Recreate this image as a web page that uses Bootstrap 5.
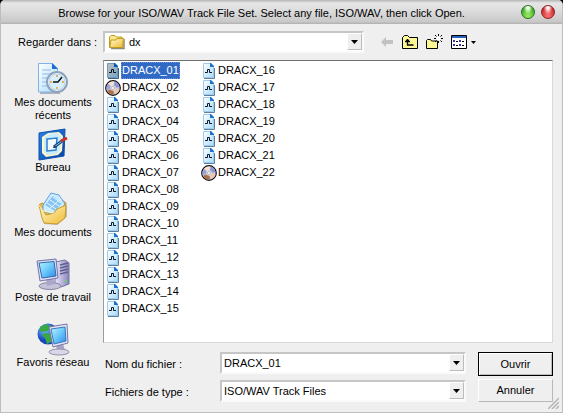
<!DOCTYPE html>
<html lang="fr">
<head>
<meta charset="utf-8">
<meta name="viewport" content="width=device-width, initial-scale=1">
<title>Browse for your ISO/WAV Track File Set</title>
<link href="https://cdn.jsdelivr.net/npm/bootstrap@5.3.0/dist/css/bootstrap.min.css" rel="stylesheet">
<style>
body{background:#000;color:#000;font:11px/13px "Liberation Sans",Arial,sans-serif}
svg{display:block;flex:none}
button,input,select{font:inherit;color:inherit}
.dialog{background:#efefef;border:1px solid #bdbdbd;border-top:0;border-radius:5px 5px 0 0;overflow:hidden;padding-bottom:10px}
.titlebar{height:24px;background:linear-gradient(#b4b4b4,#e6e6e6 3px,#dedede 40%,#c9c9c9 90%,#b0b0b0);position:relative}
.titlebar h1{font-size:11px;line-height:13px;color:#000;padding:2px 40px 0 0}
.orbs{position:absolute;right:7px;top:5px;gap:6px}
.orb{width:14px;height:14px;border-radius:50%;padding:0;border:1px solid #287020;background:radial-gradient(ellipse at 50% 10%,#fff 8%,#a8e888 30%,transparent 52%),radial-gradient(circle at 50% 85%,#9cf060,#3fa82c 70%)}
.orb-close{border-color:#8c2020;background:radial-gradient(ellipse at 50% 10%,#fff 8%,#f0a0a0 30%,transparent 52%),radial-gradient(circle at 50% 85%,#ff7070,#c82c30 70%)}
.main-grid{display:grid;grid-template-columns:102px 1fr;grid-template-rows:auto auto 1fr;padding:7px 9px 0 0}
.toolrow{height:22px}
.look-label{padding-right:6px;line-height:22px}
.sunken{background:#fff;border:2px solid;border-color:#c6c6c6 #fafafa #fafafa #c6c6c6;height:22px;min-width:0}
.sunken select,.sunken input{appearance:none;border:0;background:transparent;outline:0;padding:0 0 0 1px;min-width:0;width:100%;height:18px;border-radius:0}
.combo{display:grid;grid-template-columns:1fr 15px}
.combo>select{grid-area:1/1/2/3}
.combo>.drop{grid-area:1/2}
.drop{width:15px;height:17px;background:#efefef;border:1px solid;border-color:#fff #bcbcbc #bcbcbc #fff;padding:0;display:grid;place-items:center;pointer-events:none}
button.drop{pointer-events:auto}
.combo.look-in{width:261px;grid-template-columns:22px 1fr 15px}
.look-in>svg{grid-area:1/1;margin:1px 0 0 4px;z-index:1;pointer-events:none}
.combo.look-in>select{grid-area:1/1/2/4;padding-left:24px}
.combo.look-in>.drop{grid-area:1/3}
.tool{border:0;background:none;padding:0}
.places{padding:9px 0 0 2px;grid-row:2/4}
.place{height:65px;border:0;background:none;padding:0;width:100%;line-height:13px}
.place:last-child{height:auto}
.files{background:#fff;border:1px solid;border-color:#6f6f6f #dadada #dadada #9c9c9c;margin-top:7px;height:283px;padding:1px 0 0 1px;display:grid;grid-template-rows:repeat(15,17px);grid-auto-flow:column;grid-auto-columns:96px;align-content:start}
.file{border:0;background:none;padding:0;text-align:left;height:17px}
.file span{padding:1px;line-height:15px}
.file.selected span{background:#316ac5;color:#fff;outline:1px dotted #6d95d8;outline-offset:-1px}
.file.selected svg{filter:brightness(.75) saturate(1.3)}
.fields{padding:9px 0 0 2px;gap:12px}
.field-grid{display:grid;grid-template-columns:115px 1fr;row-gap:6px;align-content:start;align-items:center}
.field-grid select,.field-grid input{padding-left:2px}
.field-grid label{padding-top:2px}
.actions{width:75px;gap:3px}
.push{height:23px;background:#efefef;border:1px solid;border-color:#fff #b8b8b8 #b8b8b8 #fff;padding:0}
.push.primary{height:24px;border-color:#000;box-shadow:inset 1px 1px #fff,inset -1px -1px #bcbcbc}
.grip{position:absolute;right:3px;bottom:3px}
</style>
</head>
<body>
<svg width="0" height="0" class="position-absolute" aria-hidden="true">
<defs>
<linearGradient id="page" x2="1" y2="1"><stop stop-color="#fff"/><stop offset="1" stop-color="#a9dcfa"/></linearGradient>
<linearGradient id="gold" x2="1" y2="1"><stop stop-color="#fffbd0"/><stop offset="1" stop-color="#efb92f"/></linearGradient>
<linearGradient id="screen" x2="1" y2="1"><stop stop-color="#b8f4ff"/><stop offset=".5" stop-color="#6ac8fa"/><stop offset="1" stop-color="#2f86e6"/></linearGradient>
<linearGradient id="case" x2="1" y2="0"><stop stop-color="#eceafa"/><stop offset="1" stop-color="#8583b8"/></linearGradient>
<linearGradient id="blue" x2="1" y2="1"><stop stop-color="#2a86e8"/><stop offset="1" stop-color="#0b3fa4"/></linearGradient>
<radialGradient id="globe" cx=".35" cy=".3"><stop stop-color="#7cc4ff"/><stop offset="1" stop-color="#1546ba"/></radialGradient>
<pattern id="dither" width="2" height="2" patternUnits="userSpaceOnUse"><path fill="#fff36a" d="M0 0h2v2H0z"/><path fill="#fffcc0" d="M0 0h1v1H0zM1 1h1v1H1z"/></pattern>
<symbol id="wav" viewBox="0 0 16 16"><path d="M3 15.500h10.500V5" fill="none" stroke="#5f7f9c"/><path d="M2.500.5h7l3 3v11h-10z" fill="url(#page)" stroke="#9ccbee"/><path d="M9 0v4h4V3l-3-3z" fill="#1f72c8"/><path d="M4 9.500h2.500V6.500h2v3h2.500" fill="none" stroke="#101828"/></symbol>
<symbol id="disc" viewBox="0 0 16 16"><circle cx="8" cy="8" r="7.300" fill="#c9c5e4" stroke="#111" stroke-width="1.200"/><path d="M8 8L3 3.500a7 7 0 0 1 6-2z" fill="#f6e2cc"/><path d="M8 8L3 4a7 7 0 0 0-1.500 6z" fill="#9aa2dc"/><path d="M8 8l-6 3a7 7 0 0 0 7 3.500z" fill="#a9704a"/><path d="M8 8l6.500 1a7 7 0 0 1-4.500 5z" fill="#efc8ac"/><path d="M8 8l2-6.500A7 7 0 0 1 14.500 7z" fill="#8c94d6"/><circle cx="8" cy="8" r="2.800" fill="#ddd"/><circle cx="8" cy="8" r="1.500" fill="#fff" stroke="#888" stroke-width=".5"/></symbol>
<symbol id="caret" viewBox="0 0 7 4"><path d="M0 0h7L3.500 4z"/></symbol>
</defs>
</svg>

<main class="dialog position-relative">
<header class="titlebar d-flex align-items-center justify-content-center">
<h1 class="m-0 fw-normal">Browse for your ISO/WAV Track File Set. Select any file, ISO/WAV, then click Open.</h1>
<div class="orbs d-flex"><button class="orb" aria-label="Agrandir"></button><button class="orb orb-close" aria-label="Fermer"></button></div>
</header>

<div class="main-grid">
<label class="look-label text-end" for="look">Regarder dans :</label>
<div class="toolrow d-flex align-items-center">
<div class="sunken combo look-in">
<svg width="16" height="16" viewBox="0 0 16 16"><path d="M2 14.500h13V5" fill="none" stroke="#8d8a78" stroke-width="1.500"/><path d="M.5 13.500V3l1.500-1.500h4L7.500 3h5.500v10.500z" fill="#fbe88a" stroke="#c19a20"/><path d="M.8 13.500L2 6h5l1-1.500h6.500L13.500 13.500z" fill="url(#gold)" stroke="#c19a20"/></svg>
<select id="look"><option>dx</option></select>
<span class="drop"><svg width="7" height="4"><use href="#caret"/></svg></span>
</div>
<button class="tool ms-3" aria-label="Précédent"><svg width="14" height="12" viewBox="0 0 14 12"><path d="M1 6l5-5v3h7v4H6v3z" fill="#c2c2c2"/></svg></button>
<button class="tool ms-2" aria-label="Dossier parent"><svg width="16" height="14" viewBox="0 0 16 14"><path d="M.5 13.500v-11l2-2h3l2 2h8v11z" fill="url(#dither)" stroke="#000"/><path d="M3 6.500h5M4 5.500h3M5.500 4v6h6" fill="none" stroke="#000" stroke-width="1.300"/></svg></button>
<button class="tool ms-2" aria-label="Nouveau dossier"><svg width="17" height="16" viewBox="0 0 17 16"><path d="M.5 14.500v-8l1-1h3l1 1.500h6v7.500z" fill="url(#dither)" stroke="#000"/><path d="M12.500 0v2m0 5v2M8 4.500h2m5 0h2M9 1l1.500 1.500m4 4L16 8M16 1l-1.500 1.500m-4 4L9 8" stroke="#000"/><path d="M11 3h3v3h-3z" fill="#fff"/></svg></button>
<button class="tool ms-2 d-flex align-items-center" aria-label="Affichage"><svg width="16" height="14" viewBox="0 0 16 14"><path d="M.5.5h15v13H.5z" fill="#fff" stroke="#000"/><path d="M1 1h14v2H1z" fill="#2463bd"/><path d="M2 5h2v2H2zm0 4h2v2H2zm6-4h2v2H8zm0 4h2v2H8z" fill="#3838a0"/><path d="M5 6.500h2m-2 4h2m4-4h2m-2 4h2" stroke="#000"/></svg><svg class="ms-1" width="5" height="3"><use href="#caret"/></svg></button>
</div>

<nav class="places d-flex flex-column" aria-label="Emplacements">
<button class="place d-flex flex-column align-items-center"><svg width="34" height="34" viewBox="0 0 34 34"><path d="M4 31h19l1-21" fill="none" stroke="#b2b2ba" stroke-width="2"/><path d="M2.500 1.500h14l5 5V30h-19z" fill="url(#page)" stroke="#7eb3e8"/><path d="M16 1v6h6z" fill="#1d6fd6"/><path d="M6 8h9M6 12h9M6 16h7M6 20h6M6 24h8" stroke="#91b9e9"/><circle cx="21" cy="20" r="10" fill="#f6fbff" stroke="#8ba3bd" stroke-width="2"/><circle cx="21" cy="20" r="8" fill="#d7effd" stroke="#bed3e5"/><path d="M21 13v2m0 10v2m-7-7h2m10 0h2" stroke="#e39a35" stroke-width="1.500"/><path d="M17 20h5l4-5" fill="none" stroke="#111" stroke-width="1.500"/></svg>Mes documents<br>récents</button>
<button class="place d-flex flex-column align-items-center"><svg width="34" height="34" viewBox="0 0 34 34"><path d="M3 6l26-4-1 27-25 4z" fill="url(#blue)" stroke="#0b51b1"/><path d="M6 10l6-4 11-1 4 4-1 15-4 4-12 2-4-4z" fill="#fff4c4"/><path d="M8 11l5-4 9-1 3 4-1 13-3 4-10 1-3-4z" fill="#c9edff"/><path d="M11 12l10-1-1 12-9 1z" fill="#f1fbff" stroke="#2b7fd2" stroke-width="1.500"/><path d="M18 20l8-6" stroke="#174076" stroke-width="3"/><path d="M18 20l8-6" stroke="#8ac6ee"/><path d="M25 14l6-3" stroke="#cc3026" stroke-width="3"/><path d="M17 21l3-1-2-1z"/></svg>Bureau</button>
<button class="place d-flex flex-column align-items-center"><svg width="34" height="34" viewBox="0 0 34 34"><path d="M8 31l13 1 9-8V14" fill="none" stroke="#bbb" stroke-width="2"/><path d="M3 13l3-2 4 2 16-5 4 3-2 15-18-2z" fill="#eebc3d" stroke="#c39329"/><path d="M7 13L15 1l8 2 6 9-8 12-14-5z" fill="#ccecff" stroke="#5ba0df"/><path d="M9 13l8-9 9 7-7 8z" fill="#87c4f4"/><path d="M11 11l9 6m-6-9l9 6m-6-9l8 6M13 17l12-10" stroke="#e5f6ff"/><path d="M3 13l3 13 2 5 13 1 8-6 1-13-9 4-3 4-8 2z" fill="url(#gold)" stroke="#c99c2a"/><path d="M3 13l4 6 11 2" fill="none" stroke="#fff5bc"/></svg>Mes documents</button>
<button class="place d-flex flex-column align-items-center"><svg width="34" height="34" viewBox="0 0 34 34"><path d="M19 5l10-2 4 3v21l-8 3-6-3z" fill="url(#case)" stroke="#7573a5"/><path d="M24 8l8-2m-8 5l8-2m-8 5l8-2m-8 5l8-2" stroke="#625f91" stroke-width="1.300"/><path d="M29 23h2v2h-2z" fill="#65d465"/><ellipse cx="14" cy="29" rx="11" ry="3.500" fill="#c4c3d8" stroke="#8481a0"/><path d="M10 22l7-1 2 6-8 2z" fill="#aaa8ca"/><path d="M1 4l19-2 2 19-18 3z" fill="#dddcf2" stroke="#7774ac"/><path d="M3 6l15-1.500L20 19 6 21z" fill="url(#screen)" stroke="#2e6dac"/></svg>Poste de travail</button>
<button class="place d-flex flex-column align-items-center"><svg width="34" height="34" viewBox="0 0 34 34"><circle cx="12" cy="12" r="10.500" fill="url(#globe)"/><path d="M4 5l6-3 4 2-2 5-5 1-3-1zM9 11l7 1 1 7-6 3-2-6-3-3zM16 4l5 2-3 4-3-2z" fill="#38a945"/><path d="M20 23l7-1 2 6-8 1z" fill="#a6a4c6"/><ellipse cx="23" cy="30" rx="10" ry="3" fill="#d8d7e8" stroke="#9490ac"/><path d="M13 5l18-3 1 19-15 4z" fill="#e5e4f4" stroke="#7875a8"/><path d="M15 7l14-2 1 14-12 3z" fill="url(#screen)" stroke="#347abc"/></svg>Favoris réseau</button>
</nav>
<div class="files" id="files" role="listbox" aria-label="Fichiers"></div>

<div class="fields d-flex">
<div class="field-grid flex-grow-1">
<label for="name">Nom du fichier :</label>
<div class="sunken combo"><input id="name" type="text" value="DRACX_01"><button class="drop" aria-label="Noms récents"><svg width="7" height="4"><use href="#caret"/></svg></button></div>
<label for="type">Fichiers de type :</label>
<div class="sunken combo"><select id="type"><option>ISO/WAV Track Files</option></select><span class="drop"><svg width="7" height="4"><use href="#caret"/></svg></span></div>
</div>
<div class="actions d-flex flex-column"><button class="push primary">Ouvrir</button><button class="push">Annuler</button></div>
</div>
</div>
<svg class="grip" width="11" height="11" viewBox="0 0 11 11"><path d="M0 11L11 0M4 11l7-7M8 11l3-3" stroke="#b5b5b5" stroke-width="1.500"/></svg>
</main>
<script src="https://cdn.jsdelivr.net/npm/bootstrap@5.3.0/dist/js/bootstrap.bundle.min.js"></script>
<script>
const list = document.getElementById('files');
for (let i = 1; i <= 22; i++) {
  const isDisc = i === 2 || i === 22;
  list.insertAdjacentHTML('beforeend', `<button class="file d-flex align-items-center${i === 1 ? ' selected' : ''}" role="option" aria-selected="${i === 1}"><svg width="16" height="16"><use href="#${isDisc ? 'disc' : 'wav'}"/></svg><span>DRACX_${String(i).padStart(2, '0')}</span></button>`);
}
</script>
</body>
</html>
